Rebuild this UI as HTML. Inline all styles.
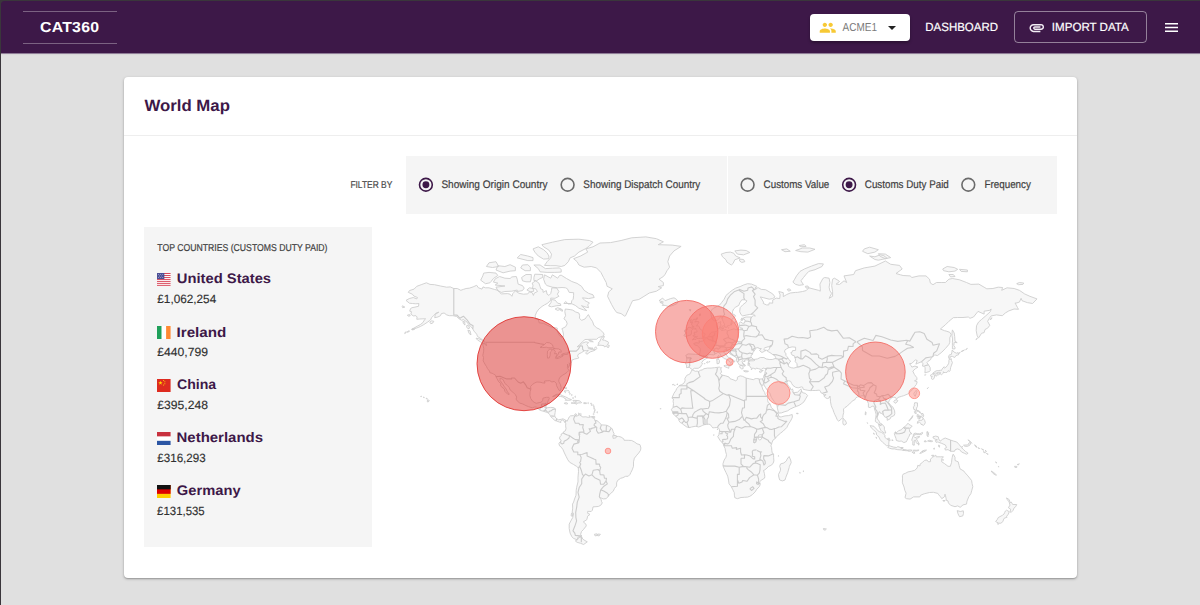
<!DOCTYPE html>
<html lang="en">
<head>
<meta charset="utf-8">
<title>CAT360 - World Map</title>
<style>
*{box-sizing:border-box;margin:0;padding:0}
html,body{width:1200px;height:605px;overflow:hidden}
body{text-rendering:geometricPrecision;background:#e0e0e0;font-family:"Liberation Sans",sans-serif;position:relative;color:#333}
.abs{position:absolute;white-space:nowrap;line-height:1}
#frame-top{position:absolute;left:0;top:0;width:1200px;height:1px;background:#3a363b;z-index:50}
#frame-left{position:absolute;left:0;top:0;width:1px;height:605px;background:#3a363b;z-index:50}
#header{position:absolute;left:0;top:0;width:1200px;height:54px;background:#3d1848;border-bottom:1px solid #8f7c97;box-shadow:0 1px 1px rgba(0,0,0,.04);border-top-left-radius:4px}
#logo{left:23px;top:11px;width:94px;height:33px;border-top:1px solid rgba(255,255,255,.32);border-bottom:1px solid rgba(255,255,255,.32)}
#logo span{position:absolute;left:17.5px;top:8.5px;font-weight:bold;font-size:14.5px;color:#fff;letter-spacing:.2px}
#acct{left:810px;top:14px;width:100px;height:27px;background:#fff;border-radius:4px;box-shadow:0 2px 3px rgba(0,0,0,.3)}
#acct .t{left:33px;top:8px;font-size:11.5px;color:#7a7a7a}
#dash{left:926px;top:21px;font-size:12px;color:#fff;-webkit-text-stroke:.2px #fff}
#imp{left:1014px;top:11px;width:133px;height:32px;border:1px solid rgba(255,255,255,.45);border-radius:4px}
#imp .t{left:38px;top:9px;font-size:12px;color:#fff;-webkit-text-stroke:.2px #fff}
#card{position:absolute;left:124px;top:77px;width:953px;height:501px;background:#fff;border-radius:4px;box-shadow:0 1px 3px rgba(0,0,0,.28),0 1px 1px rgba(0,0,0,.12)}
#title{left:20px;top:21px;font-size:16.2px;font-weight:bold;color:#3d1848}
#sep{position:absolute;left:0;top:58px;width:953px;height:1px;background:#eeeeee}
.fbox{position:absolute;top:79px;height:58px;background:#f5f5f5}
.lbl{font-size:11px;color:#3f3f3f;-webkit-text-stroke:.2px #3f3f3f}
#side{position:absolute;left:20px;top:150px;width:228px;height:320px;background:#f5f5f5}
.cn{font-size:13.8px;font-weight:bold;color:#3d1848;left:33.5px}
.cv{font-size:12px;color:#303030;left:13.5px;-webkit-text-stroke:.15px #303030}
.flag{position:absolute;left:13px;width:13.6px;height:13.2px;overflow:hidden}
/*FIT*/
#lg{transform:translate(-0.92px,0.00px) scaleX(1.0925);transform-origin:0 0}
#ac{transform:translate(-0.42px,1.00px) scaleX(0.8667);transform-origin:0 0}
#dash{transform:translate(-0.67px,0.00px) scaleX(0.9553);transform-origin:0 0}
#im{transform:translate(-1.16px,0.00px) scaleX(0.9639);transform-origin:0 0}
#title{transform:translate(0.43px,0.00px) scaleX(1.0367);transform-origin:0 0}
#fb{transform:translate(-0.62px,0.00px) scaleX(0.8401);transform-origin:0 0}
#l1{transform:translate(-0.62px,0.00px) scaleX(0.9145);transform-origin:0 0}
#l2{transform:translate(-0.65px,0.00px) scaleX(0.9021);transform-origin:0 0}
#l3{transform:translate(-0.39px,0.00px) scaleX(0.8902);transform-origin:0 0}
#l4{transform:translate(-0.20px,0.00px) scaleX(0.8925);transform-origin:0 0}
#l5{transform:translate(-0.56px,0.00px) scaleX(0.8943);transform-origin:0 0}
#top{transform:translate(-0.64px,0.00px) scaleX(0.8665);transform-origin:0 0}
#cn0{transform:translate(-1.18px,-1.00px) scaleX(1.0691);transform-origin:0 0}
#cn1{transform:translate(-1.51px,0.00px) scaleX(1.1015);transform-origin:0 0}
#cn2{transform:translate(-1.02px,-1.00px) scaleX(1.0217);transform-origin:0 0}
#cn3{transform:translate(-1.47px,-1.00px) scaleX(1.0851);transform-origin:0 0}
#cn4{transform:translate(-1.17px,-1.00px) scaleX(1.0662);transform-origin:0 0}
#cv0{transform:translate(-0.69px,0.00px) scaleX(0.9806);transform-origin:0 0}
#cv1{transform:translate(-0.69px,0.00px) scaleX(1.0124);transform-origin:0 0}
#cv2{transform:translate(-0.71px,0.00px) scaleX(1.0122);transform-origin:0 0}
#cv3{transform:translate(-0.69px,0.00px) scaleX(0.9654);transform-origin:0 0}
#cv4{transform:translate(-0.88px,0.00px) scaleX(0.9508);transform-origin:0 0}
/*ENDFIT*/
</style>
</head>
<body>
<div id="header">
  <div id="logo" class="abs"><span id="lg">CAT360</span></div>
  <div id="acct" class="abs">
    <svg class="abs" style="left:9.3px;top:4.9px" width="17.5" height="17.5" viewBox="0 0 24 24"><path fill="#f7c935" d="M16 11c1.66 0 2.99-1.34 2.99-3S17.66 5 16 5c-1.66 0-3 1.34-3 3s1.34 3 3 3zm-8 0c1.66 0 2.99-1.34 2.99-3S9.66 5 8 5C6.34 5 5 6.340 5 8s1.340 3 3 3zm0 2c-2.330 0-7 1.170-7 3.500V19h14v-2.500c0-2.330-4.670-3.500-7-3.500zm8 0c-.29 0-.62.020-.97.050 1.160.84 1.970 1.970 1.970 3.450V19h6v-2.500c0-2.330-4.670-3.500-7-3.500z"/></svg>
    <span class="abs t" id="ac">ACME1</span>
    <svg class="abs" style="left:78px;top:12px" width="8" height="4" viewBox="0 0 10 5"><path d="M0 0h10L5 5z" fill="#222"/></svg>
  </div>
  <div id="dash" class="abs">DASHBOARD</div>
  <div id="imp" class="abs">
    <svg class="abs" style="left:13.3px;top:7.1px" width="17.5" height="17.5" viewBox="0 0 24 24"><path fill="#f3eef5" d="M2 12.500C2 9.460 4.460 7 7.500 7H18c2.210 0 4 1.790 4 4s-1.790 4-4 4H9.500C8.120 15 7 13.880 7 12.500S8.120 10 9.500 10H17v2H9.410c-.55 0-.55 1 0 1H18c1.100 0 2-.9 2-2s-.9-2-2-2H7.500C5.570 9 4 10.570 4 12.500S5.570 16 7.500 16H17v2H7.500C4.460 18 2 15.540 2 12.500z"/></svg>
    <span class="abs t" id="im">IMPORT DATA</span>
  </div>
  <svg class="abs" style="left:1165px;top:23px" width="13" height="9" viewBox="0 0 13 9"><path d="M0 0h13v1.600H0zM0 3.700h13v1.600H0zM0 7.400h13V9H0z" fill="#fff"/></svg>
</div>
<div id="card">
  <div id="title" class="abs">World Map</div>
  <div id="sep"></div>
  <div class="abs" id="fb" style="left:226.500px;top:103.5px;font-size:10px;color:#4a4a4a;-webkit-text-stroke:.2px #4a4a4a">FILTER BY</div>
  <div class="fbox" style="left:282px;width:321px"></div>
  <div class="fbox" style="left:603.500px;width:329.500px"></div>
  
  <svg class="abs" style="left:0;top:0" width="953" height="140" viewBox="0 0 953 140"><circle cx="301.9" cy="107.75" r="6.4" fill="none" stroke="#3d1848" stroke-width="1.6"/><circle cx="301.9" cy="107.75" r="3.45" fill="#3d1848"/><circle cx="443.6" cy="107.75" r="6.4" fill="none" stroke="#6b6b6b" stroke-width="1.6"/><circle cx="623.6" cy="107.75" r="6.4" fill="none" stroke="#6b6b6b" stroke-width="1.6"/><circle cx="725.1" cy="107.75" r="6.4" fill="none" stroke="#3d1848" stroke-width="1.6"/><circle cx="725.1" cy="107.75" r="3.45" fill="#3d1848"/><circle cx="844.3" cy="107.75" r="6.4" fill="none" stroke="#6b6b6b" stroke-width="1.6"/></svg>
  <div class="abs lbl" id="l1" style="left:318px;top:102.500px">Showing Origin Country</div>
  <div class="abs lbl" id="l2" style="left:459.500px;top:102.500px">Showing Dispatch Country</div>
  <div class="abs lbl" id="l3" style="left:640px;top:102.500px">Customs Value</div>
  <div class="abs lbl" id="l4" style="left:741px;top:102.500px">Customs Duty Paid</div>
  <div class="abs lbl" id="l5" style="left:861px;top:102.500px">Frequency</div>
  <div id="side">
    <div class="abs" id="top" style="left:13.500px;top:16.5px;font-size:10px;color:#3f3f3f;-webkit-text-stroke:.2px #3f3f3f">TOP COUNTRIES (CUSTOMS DUTY PAID)</div>
    <div class="flag" style="top:45.5px"><svg width="13.6" height="13.2" viewBox="0 0 13 13" preserveAspectRatio="none"><rect width="13" height="13" fill="#fff"/><g fill="#d8485a"><rect y="0" width="13" height="1"/><rect y="2" width="13" height="1"/><rect y="4" width="13" height="1"/><rect y="6" width="13" height="1"/><rect y="8" width="13" height="1"/><rect y="10" width="13" height="1"/><rect y="12" width="13" height="1"/></g><rect width="7" height="6" fill="#4b4f95"/><g fill="#c9cbe6"><circle cx="1.500" cy="1.500" r=".450"/><circle cx="3.500" cy="1.500" r=".450"/><circle cx="5.500" cy="1.500" r=".450"/><circle cx="2.500" cy="3" r=".450"/><circle cx="4.500" cy="3" r=".450"/><circle cx="1.500" cy="4.500" r=".450"/><circle cx="3.500" cy="4.500" r=".450"/><circle cx="5.500" cy="4.500" r=".450"/></g></svg></div>
    <div class="abs cn" id="cn0" style="top:46px">United States</div>
    <div class="abs cv" id="cv0" style="top:66px">£1,062,254</div>
    <div class="flag" style="top:98.5px"><svg width="13.6" height="13.2" viewBox="0 0 13 13" preserveAspectRatio="none"><rect width="13" height="13" fill="#fff"/><rect width="4.300" height="13" fill="#1fa05a"/><rect x="8.700" width="4.300" height="13" fill="#ff8a33"/></svg></div>
    <div class="abs cn" id="cn1" style="top:99px">Ireland</div>
    <div class="abs cv" id="cv1" style="top:119px">£440,799</div>
    <div class="flag" style="top:151.5px"><svg width="13.6" height="13.2" viewBox="0 0 13 13" preserveAspectRatio="none"><rect width="13" height="13" fill="#de2b1f"/><path fill="#ffde00" d="M3.300 1.800l.500 1.500h1.600l-1.300.950.500 1.500-1.300-.950-1.300.950.500-1.500-1.300-.950h1.600z"/><g fill="#ffde00"><circle cx="6.300" cy="1.500" r=".5"/><circle cx="7.500" cy="2.800" r=".5"/><circle cx="7.500" cy="4.600" r=".5"/><circle cx="6.300" cy="5.900" r=".5"/></g></svg></div>
    <div class="abs cn" id="cn2" style="top:152px">China</div>
    <div class="abs cv" id="cv2" style="top:172px">£395,248</div>
    <div class="flag" style="top:204.5px"><svg width="13.6" height="13.2" viewBox="0 0 13 13" preserveAspectRatio="none"><rect width="13" height="13" fill="#fff"/><rect width="13" height="4.300" fill="#c8313e"/><rect y="8.700" width="13" height="4.300" fill="#2c56a4"/></svg></div>
    <div class="abs cn" id="cn3" style="top:205px">Netherlands</div>
    <div class="abs cv" id="cv3" style="top:225px">£316,293</div>
    <div class="flag" style="top:257.5px"><svg width="13.6" height="13.2" viewBox="0 0 13 13" preserveAspectRatio="none"><rect width="13" height="13" fill="#ffce00"/><rect width="13" height="8.700" fill="#dd0000"/><rect width="13" height="4.300" fill="#111"/></svg></div>
    <div class="abs cn" id="cn4" style="top:258px">Germany</div>
    <div class="abs cv" id="cv4" style="top:278px">£131,535</div>
  </div>
  <svg id="map" width="1200" height="605" viewBox="0 0 1200 605" style="position:absolute;left:-124px;top:-77px;pointer-events:none">
<g fill="#f7f7f7" stroke="#cecece" stroke-width=".9" stroke-linejoin="round"><path d="M406 300.4L409.2 298.6L413.2 297.5L416.8 298.9L417.5 297.5L413.8 296L412.4 294.2L408.3 292.4L409.4 290.6L414.1 289.1L416.8 286.3L421.2 284.7L426.4 282.8L430 284.4L434.4 284.7L440.5 286L446.7 287.2L450.2 286.9L453.8 288.5L457.3 288.5L460.8 290.3L463.4 289.4L466.1 288.5L469.6 288.1L473.1 286.9L476.7 285.3L478.4 287.8L482 289.1L483 286.9L485.5 287.8L489 287.8L494.3 289.4L497.8 290.3L499.9 292.7L501.3 293.9L507.5 293.6L510.1 294.2L511.9 296.3L512.8 293.6L515.4 290.9L519 293.3L523.4 294.2L527.8 293.9L529.5 291.8L532.2 292.7L533.4 295.4L534.3 293L537.5 291.5L535.7 288.8L532.5 288.5L533 285.3L532.2 283.1L535.7 280.8L538.9 283.1L540.1 286.6L540.8 288.8L542.9 289.7L543.1 292.4L546.3 290.6L547.1 294.2L548.9 295.4L550.7 293.6L551.5 290.3L551.9 287.8L556.8 288.1L558.9 291.5L557.4 294.2L558.9 296.3L555.1 298.3L550.7 298.1L550.7 300.1L547.7 303.2L544.5 304.9L542.2 306.3L538.9 309L536.6 312.2L535.2 315.7L535.5 318.8L538.3 319L539.2 322.8L543.6 323.3L547.1 325.1L552.4 327.5L557.2 328L557.5 331.8L559.5 335.4L561.2 337.2L563.2 336.8L563.5 334L562.6 330.4L561.9 328.7L565.6 326.8L567.2 323.8L566.2 320.8L563.9 318.8L565.6 315.7L564.8 311.7L565.3 309L570.1 309.6L572.7 310.1L575.7 312L578.9 313L579.7 315.7L579.4 318.3L581.7 320.3L585 319L587.1 316.2L588.4 314.6L590 317.7L592.6 321.6L593.8 325.1L596.5 327.8L599.7 329.2L601.2 330.7L603.5 333L604.1 334.9L602.1 336.5L598.6 337.5L596.5 339.3L591.2 339.3L585 339.5L582.4 341.8L579.4 344.7L577.1 346.9L579.2 346.1L582.4 343.2L585.9 341.8L588.7 342.5L586.8 344.5L588 346.3L588.4 348.5L590.3 349.1L593 349.3L594.7 350.4L590.3 351.9L586.8 354.3L585.6 352.8L588.4 350.4L586.3 350.6L584.1 350.9L581.5 352.6L578.5 354.1L577.5 356L578.9 357.9L577.1 358.5L574.5 359.1L571.8 360.2L571.6 362.2L570.1 363.9L569.2 362.8L569.7 365.1L568.3 367.7L567.6 364.1L567.4 367.7L568.8 370.5L567.1 372.3L564.8 373.9L562.6 375.2L559.8 377.4L558.8 379.9L558.9 381.8L560.4 384.5L561.2 387.5L560.7 390.3L559.3 390.6L558.1 388.6L556.5 385.6L556.3 383.3L554.2 381.4L551.9 382L549.8 380.7L547.1 380.8L544.5 381L545 383.1L542.7 382.9L540.1 382.2L536.9 382L534.8 382.9L532.2 384.6L530.6 386.5L530.9 389.2L530.1 391.8L529.9 395.6L530.8 398.6L532.7 401.3L534.8 402.6L536.2 403.3L539.2 402.6L541.3 402.2L542.7 400.4L542.9 398.2L546.3 397.3L548.9 397.3L549.3 398.6L548 400.9L547.5 403.1L546.8 404.5L545.6 407.4L547.1 407.8L550.7 407.4L553.7 407.6L555.6 409L555.1 412.6L554.7 415.2L555.1 417L556.8 418.8L558.6 419.8L561.2 419.3L563 418.8L565.6 420.2L566 420.3L565.1 422.6L563.9 420.9L562.1 419.8L560.7 421.1L560.9 422.5L559.5 422.1L556.8 421.1L554.9 420.5L552.4 418.2L551 417L549.8 414.7L548 412.8L546.3 412.2L543.6 411.3L541 410.6L539.2 409.7L536.6 407L534.8 407L532.2 407.8L528.6 406.7L526 405.6L522.8 404L519.8 403.1L517.2 400.9L516.1 399.1L516.7 397.1L515.4 394.7L512.8 392.1L510.1 389.9L509.3 387.7L507.5 385.6L504.9 383.5L503.1 379.5L500.1 378.1L500.1 380.5L502.2 383.3L504 386.2L506.1 389L507.5 391.8L509.3 394.2L508 394.5L504.9 391.4L504.3 389L501.3 386.7L500.5 385.2L501 383.7L498.7 381.8L496.9 378.5L495.9 376.6L495.5 375.2L493.6 374.1L492.2 373.3L489.9 372.7L489.5 371.1L487.4 368.5L486.4 366.3L485.5 365.1L484.1 362.6L483.2 360.8L483.5 357.5L482.8 355.4L483.7 351.1L483.7 348.3L482.5 343.6L485.5 344.1L486.4 345.8L485.8 342.3L485.1 341.6L482.8 340L480.2 338.2L477.5 336.5L476.7 334.2L474 331.1L472.8 329L471.4 327L468.7 324.6L467 322.1L463.4 319.5L461.7 320.3L459.4 319L456.4 316.4L452.9 315.7L449.4 315.7L446.7 314.9L444.1 313L441.4 313.6L440.5 315.7L437.9 317L434.7 317.7L435.3 314.4L438.8 312.2L436.1 313L433.5 315.7L431.7 317.5L430.5 320L427.3 322.3L423.8 324.6L420.3 326.5L416.8 328L414.1 328.7L411.8 329.2L415 327.5L417.6 326L420.3 324.6L422.9 322.6L424.7 319.5L425.6 318.8L422.9 318.8L419.4 319L416.8 319.3L417.1 317L415.9 315.7L413.2 315.9L410.9 314.1L411.5 311.7L409.7 311.2L410.6 308.5L412 307.7L415 307.1L418.5 306.3L418.9 303.5L415.9 303.8L412.4 303.5L409.4 303.2ZM624.7 316.2L621.1 313.6L616.7 312.5L614.1 309L611.5 304.3L609.7 300.7L607.6 296.3L608.8 291.8L612.3 288.8L607.1 286.3L606.2 282.5L603.5 277.5L600.9 272.4L596.5 267.9L591.2 266.5L584.1 267.2L578.9 265L577.1 261.7L573.6 258.7L580.6 256L587.7 252.1L585.9 248.9L593 246.8L600 243L610.6 242.6L621.1 240.5L631.7 237.8L645.8 236.9L656.4 238.7L663.4 241.8L658.2 244.7L672.2 245.1L681.1 246.4L674 250.9L669.6 256L667.8 261.7L669.6 267.2L667 270.7L665.2 274.2L663.4 276.5L659 279.2L663.4 282.5L663.4 285.6L658.2 286.6L661.7 287.8L656.4 291.2L649.3 293L644.1 296.3L638.8 299.5L632.6 300.7L630.8 304.3L629.1 308.2L626.8 313L625.6 315.7ZM659 300.7L662.6 298.1L665.2 300.7L670.5 298.6L674 297.8L676.3 299.2L678.2 301.5L676.7 303.8L673.1 305.4L668.7 306.6L665.2 305.4L662.2 305.4L663.4 304L659.9 302.4L663.4 302.1ZM586.8 310.6L581.5 305.7L585.9 307.1L588.6 307.7L587.7 304.9L589.4 302.9L585 300.7L582.4 297.8L588.6 298.6L594.2 297.5L593 294.8L588.6 293.3L584.1 290.3L581.5 286.3L577.1 283.4L571.8 281.5L566.5 278.5L561.2 275.2L559.5 275.5L557.7 278.2L552.4 274.8L550.7 278.2L544.5 274.8L543.6 279.2L545.4 284.1L547.1 285.6L552.4 287.2L557.7 287.8L562.1 287.5L565.6 287.8L567.4 288.8L569.2 292.4L573.6 292.7L573.6 295.4L573.2 299.2L571.8 300.7L571.3 303.5L563.9 303.5L565.6 301.5L568.3 304L571.8 303.8L575.3 305.4L578.9 308.2L583.3 309.8ZM524.2 288.1L522.5 290.6L517.2 291.5L517.2 290L511.9 291.2L504.9 291.5L501.3 292.4L497.8 290.6L496 287.2L504.9 286L495.2 285L497.8 283.1L493.4 282.1L495.2 278.9L499.6 276.5L504.9 278.2L510.1 278.5L511.9 276.9L516.3 276.5L517.2 279.2L518.1 284.1L522.5 285.6ZM485.5 283.7L489.9 282.8L491.1 281.5L493.4 278.5L497.8 275.5L496 273.1L489 272.4L483.7 273.1L482.8 275.9L480.7 280.2ZM593 242.2L589.4 246L585.9 248.5L578.9 252.1L574.5 256L570.1 257.9L568.3 261.7L564.8 265.4L561.2 266.5L556 265.7L550.7 265.7L544.5 265.4L547.1 261.7L550.7 257.9L551.5 254.1L548.9 250.1L543.6 246.8L541.9 244.7L552.4 242.2L564.8 239.6L578.9 239.2L589.4 240.5ZM548.9 258.7L543.6 259.1L538.3 256L534.8 252.1L533 248.9L538.3 246.8L543.6 249.7L547.1 252.9L548.9 256ZM561.2 272.1L554.2 272.4L547.1 272.4L540.1 271.8L538.3 268.6L533.9 265L540.1 265L545.4 268.6L552.4 268.2L559.5 267.9L561.2 269.7ZM542.7 274.5L534.8 274.2L533.9 277.5L533.9 280.5L536.6 280.8L540.1 278.5L542.7 277.5ZM531.3 274.5L526 274.5L521.6 277.5L522.5 280.8L526 281.8L530.4 281.8L531.3 278.2ZM515.4 270.7L510.1 271.1L503.1 272.8L496 270L497.8 265.7L504.9 266.5L510.1 264.7L515.4 267.2ZM530.4 270.7L525.1 270.7L520.7 267.9L522.5 265L527.8 264.7L530.4 267.2ZM498.7 266.5L492.5 267.5L486.4 266.5L489 262.8L496 261.7ZM533 260.6L527.8 260.6L517.2 257.9L520.7 254.5L527.8 256L533 257.6ZM560.9 305.4L556.8 305.7L551.5 306.8L548.6 306L551 302.4L551.5 299.5L555.1 300.1L557.7 303.2L560.4 303.8ZM533.9 291.2L530.4 291.8L526.9 290L529.5 287.8L533 288.5ZM561.2 309L557.7 310.4L555.1 309L557.7 307.7ZM562.5 311.2L560.7 310.6L561.2 309.3L562.5 309.8ZM597.7 345.4L599.1 343.4L598.2 343.2L600 341.1L600.9 338.9L602.3 337L604.4 336.3L603.7 338.2L602.5 340L604.4 340.2L607.1 341.4L607.9 341.6L608.6 342.9L607.4 344.9L609.3 345.4L608.6 347.5L607.1 347.2L606.7 345.8L604.4 346.9L603.9 345.6L601.8 345.4L600 345.2ZM594 349.8L596 349.6L596.8 348.7L595.8 346.7L594.2 348.3ZM588.9 347.6L591.2 348L593 348L592.1 348.9L589.8 348.5ZM588.6 340.2L592.1 340.9L593.3 341.8L590.3 341.6ZM476 338.2L478.4 338.6L482 340L484.6 342.9L484.8 343.6L482.5 343.4L480.2 341.6L477.5 340ZM467.9 330.2L470 330.7L471 334.9L469.1 333.5ZM429.8 322.1L431.7 320.8L433.8 321.3L433 322.8L430.9 323.8ZM467 325.1L468.7 325.8L469.6 328.2L467.9 328.7L466.6 327ZM462.9 321.1L464.7 321.8L465 325.1L463.4 323.6ZM402 306.3L402.7 305.9L404.8 307.1L402.7 307.7ZM407.4 315.1L409.7 314.6L410.2 315.9L408.3 316.2ZM411.6 329.5L414.1 329L414.5 329.5L412 329.9ZM407.1 331.8L409.2 330.7L409.4 331.4L407.4 332.3ZM404.4 333L406.2 331.8L406.5 332.3L404.8 333.5ZM427.3 401.8L427.5 399.7L429.1 400.4L429.4 400.9L428 402ZM426.1 398.4L427 398.2L427.3 398.7L426.4 398.9ZM423.3 397.3L424 396.9L424.3 397.6L423.6 397.6ZM420.6 396.4L421.3 396L421.5 396.6L420.8 396.6ZM552.6 396.6L556 394.5L557 394.2L560.4 394.5L562.1 395.6L565.6 396.9L568.8 398.6L571.6 399.7L570.1 400.2L565.3 400.3L566.2 399.1L564.2 398.2L563.5 397.1L560.4 396.4L558.1 396L555.1 396ZM571.1 403L573.9 402.9L574.6 402.6L573.9 401.6L572.9 400.4L575.9 400.4L579 400.7L580.3 401.3L581.7 402.6L580.6 402.9L578.9 402.9L576.9 403.3L576.4 404.4L575.3 403.5L573.6 403.3ZM564.2 403.1L566.5 402.7L567.9 403.6L566.5 404L564.4 403.5ZM583.8 402.7L586.6 402.9L586.3 403.6L583.8 403.6ZM564.4 390.6L565.3 391.8L565.5 392.7L564.4 391.8ZM563.2 387.7L564.9 387.7L566.2 388.6L564.8 388ZM593.1 416.6L594.7 416.5L594.7 417.7L593.1 417.7ZM566 420.3L566.9 421.4L568.3 418.9L569.2 417L570.4 415.9L573.6 415.6L575.9 413.6L576.6 414.7L575.5 415.9L576.2 416.3L578.9 415.2L578.9 414L579.7 415.2L581.9 416.1L582.4 417L585.9 416.8L588.6 417.5L591.2 416.6L593 416.6L591.7 417.4L594.7 418.8L594.7 420.5L596.5 420.5L598.2 421.4L600 423.5L601.8 424.9L605.3 425.1L607.1 425.4L609.7 426.7L611.3 428.1L612.3 428.8L613.2 431.9L614.1 433.7L613.6 435.1L615.5 435.7L616.7 436.6L618.5 436.4L621.1 437.1L623.8 438.9L624.1 440.3L628.2 440.3L631.7 440.5L634.4 441.9L637 443.8L640 444.7L640.9 448L640.5 450.3L638.8 452.9L636.8 455.2L634.4 458.2L633.5 461.8L633.5 466.3L632.2 469.9L630.8 472.6L630 474.4L628.2 476.3L625.6 476.3L622.9 477.7L620.6 478.3L617.6 480.5L616.6 482.8L616.6 486L614.5 488.4L613.2 491.3L610.4 493.6L608.1 496.5L606.2 498.7L603.2 498.9L600 497.5L599.3 497.1L601.2 499.7L601.6 501.7L602.3 502.9L600.7 505.3L598.2 506.5L593 506.9L592.4 510.2L591.2 511.5L587.7 511.3L587.7 513.3L590 514.4L587.7 516.1L586.8 519.7L583.3 521.9L585.9 524.1L586.3 525.9L583.3 529.7L581.5 531.5L580.6 534.3L581.7 536.1L578 537.1L577.1 539.7L573.6 538.5L571.8 536.6L570.1 533.1L569.2 528.5L569.2 524.1L570.9 520.8L572.7 517.6L573.6 513.3L572.2 512.3L572.7 508.2L572.5 504.1L573.6 502.1L574.5 499.1L576 495.2L576.2 490.3L576.6 487.5L578 481.8L578 477.2L578.5 471.7L578.3 467.9L576.6 466.4L573.6 464.5L569.7 462.3L567.8 459.8L566.2 456.6L564.4 452.9L563 449.7L561.4 447.3L559.5 445.9L558.9 443.3L560.7 441.3L561.2 440.1L559.7 439.2L559.7 437.1L561.2 435.4L561.2 434L563.2 433L563.4 431.9L565.3 430.9L566 428.6L565.6 425.8L565.8 423.7L565.1 422.6ZM581.7 536.8L578.9 537.5L577.5 539.7L575.3 540.9L577.1 542.3L580.6 543.3L583.6 544.5L587.3 541.8L585 540.6L582.7 539ZM571.5 513.1L572.7 513.3L572.5 516.3L571.1 515.9ZM594.4 534.3L596.8 533.8L597.4 535.4L595.1 535.9ZM597.7 534L600.4 534.3L599.1 535.9L597.5 535.6ZM612.7 435.7L615 435.7L616.7 435.9L616 437.8L613.2 438.4ZM691.8 370.1L692.9 369.9L695.2 371.3L697.1 371.1L698.7 371.5L700.4 370.3L702.2 369.9L704 368.7L707.5 368.1L711 368.1L714.5 367.7L719.5 367.1L720.3 367.7L721.6 367.7L720.7 368.9L721.2 370.7L721.6 372.3L720.2 373.3L721.2 374.5L722.5 375.2L725.5 375.8L729 377L730 378.7L733 379.7L735.7 380.8L737.4 379.5L737.4 377.2L740.1 375.8L742.7 376.4L746.2 378.1L749.8 378.9L753.3 379.7L755.1 378.7L756.8 378.5L759.1 378.9L759.5 381.4L759.6 382.4L761.2 385.2L762.1 387.1L763 389.9L764.8 392.7L765.1 394.5L767.2 396.4L767.7 398.2L767.7 400.7L768.3 402.7L770 403.6L771.4 407.8L773.6 409.4L775.3 411.2L777.1 412.6L778.3 413.5L778.5 415.2L779.7 417L781.5 416.8L785 415.9L788.5 415.6L792.2 414.5L792.4 417L791.7 418.8L790.3 421.4L788.5 424L786.8 427.5L783.3 431L780.6 433.1L778 435.4L776.2 437.1L775.3 438.5L773 440.1L772 442.7L770.9 445.9L771.6 447.6L771.8 450.3L772.2 452.9L773.6 454L773.6 457.3L773.9 460.9L773 463.6L770.9 465.4L768.3 466.6L767 468.1L764.8 469.9L763.5 470.4L764.4 473.5L764.8 476.3L764.6 478.1L761.2 480.3L759.6 481.8L760.2 484.6L759.3 486.7L756.8 489.2L755.1 491.9L752.4 494.6L749.8 496.3L747.5 497.1L744.5 497.3L741 497.5L737.4 498.7L734.8 497.7L734.4 495.2L734.3 492.7L732.7 489.4L731.3 486.7L729 483.7L728.5 480L727.7 476.1L726 472.6L724.2 468.8L723 465.9L723 463.6L724.2 460L726 457.2L726.5 454.7L725.5 451.2L725.1 448.5L723.9 446.1L723.3 444.1L721.9 442.4L719.8 440.1L718.6 438L717.7 436.6L718.9 434.9L719.1 433.3L719.5 431.4L719.5 429.6L718.9 428.4L717.7 427.5L716.8 427.5L714.5 427.7L712.8 427.9L711.5 426.3L710.1 424.4L708.2 424.2L706.6 424.4L704.3 424.7L702.2 425.4L701.8 425.8L698.7 427L696.9 426.5L695.2 426.3L691.6 427L689 427.7L686.3 426.7L683.2 424.4L681.9 423.3L680.2 422.5L678.9 420.5L678.8 418.8L676.3 417L675.8 416.1L674 414.7L672.8 413.6L672.6 412L671.4 409.6L673.1 407.2L673.5 403.6L673.1 401.3L673.5 399.1L672.1 398.4L672.2 397.3L674 393.2L675.9 390.5L676.7 388.6L678.4 386.7L679.5 385.4L681.9 384.6L684.2 382.8L685.1 380.7L684.9 378.5L686 376.6L687.2 375L688.8 374.5L690.2 373.7L691.3 371.3ZM789.1 456.5L790.7 460L791.2 462.7L789.4 466.3L789.2 467.5L787.7 472.6L785.9 477.2L785 480L782.4 480.9L779.7 480L778.8 477L778.5 474.4L780.3 470.8L780.6 469L779.7 466.3L780.6 463.9L783.8 463L786.4 460.9L787.1 459.1ZM796.3 413.3L798.2 413.3L798.1 413.8L796.5 413.6ZM672.4 384.5L673.7 384.3L673.1 385.2ZM674.4 385L675.1 385L674.9 385.6ZM677.2 383.9L677.9 384.1L677 385ZM660.3 408.5L661 408.7L660.6 409.2ZM799.6 472.4L800.5 472.8L800 473.3ZM803.3 470.8L804 471.3L803.3 471.7ZM778.5 455.6L778.8 456.1L778.3 456.3ZM717.4 428.8L717.9 429.1L717.4 429.8ZM713.7 434.7L714.2 434.9L713.7 435.4ZM692.3 369.7L691.1 368.7L689.2 367.3L686.5 367.7L686.7 364.9L685.5 364.1L686.5 361.2L686.9 359.1L686.5 357L685.8 355.4L688.1 353.9L692 354.1L695.5 354.3L699 354.5L699.6 354.1L700.1 351.7L700.3 349.8L700.1 348.5L698.3 346.5L697.3 345.6L694.6 344.9L693.7 343.6L696 342.7L698.7 343.1L699.4 342.9L698.9 340.7L700.3 341.4L702.4 341.1L704.8 339.8L705 337.9L706.6 337.5L708.2 336.8L709.2 335.4L710.5 333L711.9 332.1L714.5 331.8L716.3 331.4L717.4 330.9L717.9 329.5L717.4 328.2L716.5 326.8L716.5 324.6L717.4 323.1L720.9 321.6L720.3 324.3L721.4 324.8L720.2 326.3L719.3 327.8L719.6 328.7L721.4 329.7L721.6 330.7L723.7 330.2L726 329.5L727.4 330.9L730.4 329.9L734.4 328.7L735.1 329.7L736.9 329.7L737.4 328.5L739.2 327.5L739.4 325.8L739.2 323.3L740.4 321.8L742.7 323.3L744.5 323.1L745.2 320L743.6 319L743.6 317.7L746.2 317L751.5 317L753.3 315.7L755.4 315.9L753.3 314.1L749.8 314.4L746.2 315.1L742.7 315.9L741 314.6L739.7 311.7L740.1 307.7L742.7 304.9L746.2 302.1L746.8 300.7L744.8 299.8L741.8 299.8L739.7 302.9L738.8 305.4L735.7 307.1L733.6 309L732.5 311.7L732.5 313.8L734.8 314.9L735.5 316.2L734.1 317.5L731.8 319.5L731.3 322.1L730.7 324.6L729.5 325.6L727.4 325.8L727.2 327.3L725.1 327.3L724.6 325.6L724.4 324.1L723.2 321.6L721.9 318.5L721.1 317.5L720.9 315.9L719.5 318.3L717.2 320.3L714.5 320.8L712.2 319.3L711.5 317L711 314.6L711 311.7L711.5 309.8L713.7 308.2L717.2 306.3L719.8 304.9L721.6 302.6L724.2 299.2L726 295.4L729.5 292.4L732.2 290.3L735.7 288.1L740.1 286.6L743.6 285L747.5 283.7L751.5 284.1L756.8 286.3L755.1 288.1L758.6 287.8L761.2 289.4L765.6 289.7L772.7 293.9L775 296.9L772.7 298.6L769.2 299.2L763.9 297.8L760.3 296.9L761.2 298.3L763.5 302.1L763.3 303.5L766.5 304.9L768.8 304.9L769.2 302.9L772.7 303.2L772.7 300.1L776.2 298.1L779.7 298.6L780.1 294.8L778.8 291.5L783.3 292.7L783.3 296.6L786.8 294.5L790.3 293L795.6 292.4L797.3 292.4L802.6 291.5L806.2 290.6L808.8 287.8L815 289.4L818.5 290.3L820.3 291.2L820.3 288.5L819.9 284.1L822.9 278.5L824.7 277.5L829.1 278.2L829.9 282.5L829.1 287.2L829.9 290.9L831.7 293.3L829.1 298.3L832.6 296.3L832.6 291.8L831.7 285.6L832.6 279.2L834.4 278.2L837.9 280.2L839.6 281.5L836.1 284.1L839.6 284.4L844 280.8L846.7 282.5L844 275.9L853.7 274.5L855.5 270.7L864.3 267.9L874.9 266.1L885.4 261L890.7 264.3L899.5 265.4L902.2 269L896 273.5L900.4 274.8L903.1 275.5L910.1 275.9L911.9 277.5L918.9 275.9L926 275.9L929.5 279.2L930.4 283.1L933 284.7L936.5 282.5L941.8 282.5L945.4 282.5L948.9 279.2L952.4 278.5L959.5 279.8L966.5 282.5L970.9 284.4L978.8 284.1L984.1 287.2L986.8 288.8L992.9 288.5L998.2 287.2L1002.6 287.5L1001.7 290.3L1007 287.8L1014.1 288.5L1019.4 290.3L1024.6 293.9L1029.9 296.3L1037 298.9L1032.6 303.5L1027.3 302.6L1022 300.7L1021.1 298.3L1019.4 302.1L1015.8 303.2L1015 302.9L1017.6 307.7L1018.5 309.3L1014.1 309L1008.8 310.9L1005.3 313L1002.3 315.7L996.5 314.9L991.2 315.9L989.4 318.3L987.6 321.3L989.8 325.3L987.6 328.2L985 329.5L984.1 332.6L981.5 333.3L978.8 337.7L978.3 337.9L977.1 335.4L976.2 330.7L976.5 325.8L978.5 322.1L981.5 319.5L985.9 315.7L990.3 311.7L991.2 309L989.4 310.4L984.1 311.2L984.1 314.1L978 311.4L973.5 317L970 318.3L968.3 317L963 317.5L957.7 317.5L953.3 317.7L948.9 321.3L945.4 324.8L940.4 329L944.5 330.7L946.2 331.1L949.8 332.3L951.2 334.7L949.8 337.7L949.8 342.3L948.9 344.5L945.4 348.5L941.8 352.2L937.4 355.6L934.8 354.9L932.5 356.8L931.3 357.5L930.7 359.5L927.7 361.6L926.9 362.6L928.4 364.7L930.2 367.7L930.2 370.7L929.5 371.5L926.9 372.3L924.9 372.9L925.1 370.5L925.1 367.7L924.2 366.3L922.5 366.1L923 363.7L921.4 361.8L917.2 363.5L915.9 364.1L917.2 360.6L915.4 359.8L911.9 363.3L909.6 363.7L911 365.7L911.9 367.1L914.9 366.1L918 367.1L915.4 368.7L912.8 371.1L914.5 374.7L916.8 377.6L917 379.7L914.5 380.8L917.2 381.8L916.3 384.6L914.5 386.7L912.9 389.3L910.3 391.8L907.8 394L903.4 395.8L901.3 396.4L897.8 397.5L896.5 399.5L895.7 397.5L893 397.1L890.7 398.4L889 400.9L888.6 402.6L890.7 405.4L893 407.2L894.6 410.8L894.8 413.5L894.3 415.4L890.7 417.2L890.2 418.8L887.2 420.3L887.2 417.9L884.6 416.8L883.5 414.9L881.9 413.5L880.2 413.1L880 411.9L878.9 411.9L878.4 414.3L877.2 417L877.2 419.1L878.9 420.5L879.5 422.8L881.4 423.7L882.5 424.6L884.4 427L884.4 429.3L885.8 433L884.4 433L881.9 431.4L880.7 430.2L879.5 427.5L878.9 425.8L878.8 424L877.9 423.2L875.4 421.6L875.4 419.6L875.9 417L876.1 414.3L875.4 411.7L874.5 409L874.2 406.3L872.2 406.2L870.1 407.6L868.4 407.2L868.4 403.6L867.3 400.9L865.7 399.1L864.8 398.2L864 395.8L861.7 395.8L859 396.7L857.3 396.9L855.5 398.2L855.1 399.5L852.9 400.7L850.2 403.1L847.2 406.2L844.9 407.6L843.5 409L843.7 412.4L843 415.2L842.8 417.4L841.4 419.1L840 420L838.8 421.2L837 419.6L836.5 417.9L834.9 414.7L834 412.6L832.9 409.4L832.2 408.1L831.2 405.4L830.5 401.8L830.3 398.2L829.9 396L829.1 398L827.3 398.6L825.5 397.8L823.8 395.8L826.1 394.7L823.8 394.9L822.5 393.4L821.1 392.9L820.3 391.2L819.4 390.1L815.8 390.5L812.3 390.5L810.7 390.6L807.9 390.3L805.8 389.9L803.2 389.3L802.6 387.1L801.4 386.9L798.2 387.8L795.6 387.3L792.9 385.4L791.7 383.5L790.7 381.4L788.5 380.7L787.8 381.4L786.8 382.6L787.5 384.3L788.5 386.2L790.3 387.7L790.7 389.7L791.7 389.9L792.4 388.8L793.1 390.8L792.6 392.1L794.7 392.5L797.3 392.3L799.6 390.3L801 388.8L801.6 391L802.6 392.7L805.5 393.4L807.6 395.5L805.5 399.1L804 401.8L801.8 403.6L799.1 405.4L794.2 407.2L790.3 409L787.7 410.8L784.1 411.9L781.5 412.9L778.8 413.1L778 410.8L777.4 408.1L777.1 405.8L774.4 401.8L771.3 397.3L770 393.6L767.7 390.8L765.6 387.7L763.9 385L763.9 382.4L762.8 385.2L762.5 385.8L760.7 384.3L759.6 381.6L759.3 379.1L762.5 378.9L763.5 377.4L763.9 375.6L764.8 373.9L765.3 370.7L765.8 369.7L766 368.5L764.8 368.5L763.2 368.1L761.2 369.5L758.6 368.7L756.3 368.1L755.8 369.1L753.5 368.3L751.9 368.3L750.5 367.7L750.1 366.3L748.5 365.1L749.8 364.7L749.4 363.1L748.2 362.6L748.4 361.6L750.7 360.8L753.3 360.8L754.9 360.2L753.3 359.5L755.1 359.3L757.5 358.9L760.3 357.5L763.9 357.5L766.2 358.9L769.2 359.5L772.2 359.5L775.3 358.5L775.7 357.3L774.4 355.4L772.7 354.5L770 352.6L768.3 351.7L766.9 350.6L768.3 350.2L769.5 348.9L769.2 347.6L771.4 346.5L769.5 346.5L768.3 346.7L764.8 347.8L763.9 348.7L764.2 350.2L766.5 350.2L764.6 351.1L762.8 352.2L761.2 352.2L759.5 350.2L761.4 348.7L758.6 348.3L758.4 347.6L756.3 347.8L754.5 350.4L752.8 352.8L752.4 354.5L751.4 354.9L751 356.4L751.5 357.7L753.3 359.1L751.5 359.5L749.8 360.2L748.4 361L749.4 360.4L748 360L746.2 359.8L744.5 360.2L745 361.4L743.6 361.6L742.5 360.6L742 361.6L742.7 363.1L743.1 364.3L744.5 365.3L744.5 366.3L743.4 365.7L742.7 365.9L743.1 366.9L743.1 368.7L741.7 368.9L740.4 368.1L739.7 366.3L740.4 365.3L742.5 365.5L740.1 365L739.2 364.9L738.7 363.9L737.8 362.4L736.2 360.8L736.6 358.5L736.2 357.7L734.8 356.6L733 355.4L730.4 354.3L729 352.8L727.7 350.6L726.7 351.5L726.2 350L726.5 349.6L723.9 350.2L723.9 352.6L726.2 354.1L727.2 356.4L729 357.7L730.7 357.7L730.4 358.7L732.2 359.3L734.8 361.2L734.6 362L732.5 360.6L731.4 362.2L732.3 363.7L731.3 364.9L730.6 365.9L729.8 365.7L730.2 364.5L730.7 363.3L730 361.8L729.2 361.4L728.3 360.4L727.2 360L726.2 359.1L724.4 358.7L723.7 357.9L721.6 356.6L720.7 355.4L720.3 354.3L719.5 353L717.9 352.4L716.3 353.4L715.2 353.9L713.7 354.9L711.7 354.7L710.1 354.5L708.4 354.7L707.5 356.4L707.8 357.7L706.1 358.7L703.6 360L701.7 362.6L702.6 364.1L701.3 365.1L701 366.5L699 367.7L698.3 368.3L696 368.3L694.4 368.3L692.9 369.3ZM692.2 339.9L694.8 339.2L695.9 339.5L696.9 338.4L698.7 338.6L700.4 338.3L702.7 338.3L704 337.7L704.7 337.2L704.7 336.8L703.3 336.5L704 335.9L705.2 334.2L704.5 333.2L703.1 333L702.6 333.3L702.8 332.6L702.4 331.6L702 330.4L701.1 329.5L700.1 329.1L699.6 328L699.4 326.8L698.7 326.3L697.6 325.8L696.4 325.8L697.6 325.1L697.3 324.7L698.5 323.1L699 322.1L698.7 321.6L696 321.6L694.8 322.1L695.3 321.1L696.7 319.8L696.9 319.2L693.4 319.3L692.9 320.3L692 321.8L692.3 323.3L691.3 324.1L692.3 325.1L692.2 327.5L693.4 326.5L693.7 326L693.7 327.5L693.2 328.6L693.6 329.1L696 328.5L695.9 329.5L696.6 330.4L697.1 330.8L696.9 332.1L696.4 332.2L694.4 332.1L693.9 333.5L695 334L695 334.7L693.9 335.2L692.9 335.6L693.2 336.2L694.8 336.3L696.6 336.7L697.4 336.3L696.9 337.2L694.8 337.2L694.2 337.7L693.2 339.1ZM690.9 334.9L691.5 333L691.5 332.1L691.3 330.7L692.5 329.7L692.3 329L691.5 327.8L689.2 327.3L687.6 327.9L687 329L687.6 329.5L684.6 330.2L684.6 331.8L686.3 332.6L685.5 333.3L684.8 334.4L683.9 335.2L684.4 336.1L685.5 336.5L687.6 335.9L689.9 335.2ZM689.7 320.8L691.3 319.5L691.3 320.3L690.2 321.3ZM690.4 322.1L691.5 321.8L692.2 322.8L691.1 323.1ZM699.4 314.1L700.4 313.8L700.3 315.7L699.6 315.9ZM696.4 318L697.6 317.7L697.3 318.8L696.4 318.5ZM689.3 309.6L690.7 309.6L690.4 311.2ZM721.9 326.5L723.3 325.6L724.4 326.5L723.7 327.8L723.3 329L721.9 327.8ZM719.5 327L720.9 326.8L721.2 327.8L720.2 328.1ZM721.6 328.5L723.2 328.7L722.8 329.2L721.8 329ZM734.3 323.1L735.7 321.1L735.3 322.6L734.4 323.6ZM731.1 325.3L732.3 322.6L732 323.6ZM740.6 320L741.3 319.3L743.3 319.5L742 320.6ZM741.1 318.5L742.4 318L742.7 318.8L741.8 319ZM728.1 327.8L728.8 327.8L728.6 328.2ZM724 365.7L725.6 365.3L729.7 365.1L728.8 367.1L728.8 368.3L727.4 367.7L724.4 366.5ZM716.6 359.5L718.4 359L719.5 360.6L719.1 363.3L718.1 363.7L717 363.7L717 361ZM717.4 356.6L718.8 355.4L719 357.3L718.4 358.7L717.5 358.1ZM743.6 370.7L744.8 370.7L747.5 371L748.5 371.3L748 371.7L745.7 371.9L743.8 371.2ZM759.1 371.7L760.2 371L763.2 370.3L761.9 371.7L760.3 372.5ZM706.4 362.4L707.8 361.7L708.2 362.4L707.5 363.1ZM708.9 361.6L709.8 361.6L709.6 362ZM704.3 363.7L705 363.5L704.7 364.1ZM751 369.3L751.9 368.9L751.5 369.9ZM742.7 363.7L744.7 364.5L745.5 365.7L744.5 364.9ZM747.8 363.3L749.1 363.1L748.9 363.7L748 363.7ZM747.8 364.5L748.4 364.7L748 365.3ZM721.2 254.1L722.5 256.8L726 259.8L726.9 262.1L731.3 265L733 263.6L734.8 259.8L740.1 257.9L735.7 256L733.9 253.3L730.4 252.1L726 252.5ZM734.8 250.9L737.4 254.1L743.6 254.8L749.8 252.5L746.2 250.5L741 250.1ZM739.7 259.1L743.6 259.5L744.8 261.7L741.8 262.4L739.6 261ZM792.9 282.1L794.7 279.2L796.5 275.9L800 271.4L804.4 269L811.4 266.1L818.5 263.6L823.4 263.9L822 266.5L815 269.7L808.8 271.4L806.2 274.2L803.5 277.5L800.9 280.8L803.5 284.7L799.1 285.3L795.6 284.4ZM787.3 289.4L789.4 288.8L790.8 290.3L788.5 291.2ZM805.3 286.3L807.9 286L808.8 287.8L806.2 288.1ZM781.5 249.7L786.8 248.9L790.3 251.3L785 251.7ZM795.6 250.5L802.6 248L809.7 248L815 249.3L807.9 252.1L800.9 251.7ZM799.1 245.6L804.4 244.7L806.2 246.4L800.9 246.8ZM869.6 256L874.9 256.8L880.2 254.8L883.7 255.6L887.2 258.3L878.4 260.2L874.9 259.5ZM862.5 251.3L867.8 253.7L874.9 252.1L878.4 249.7L869.6 247.2L864.3 248.9ZM878.4 253.7L885.4 254.1L890.7 257.6L885.4 258.7L880.2 256.4ZM942.7 269L947.1 266.5L954.2 267.5L957.7 269.3L955 271.1L948.9 271.8L943.6 270.7ZM959.5 269.3L967.4 270L967.4 271.8L961.2 271.4ZM948.9 274.5L953.3 274.5L955 276.5L950.6 276.9ZM1016.7 283.7L1019.4 282.5L1023.8 283.1L1022.9 284.4L1018.5 284.7ZM952.4 329.9L954.2 333L954.7 336.5L955 341.1L957.2 342.7L954.2 342.3L953.8 345.6L955 347.4L954.9 348.9L952.4 348.9L952.4 345.6L952.4 342.3L952.6 338.9L951.9 335.4L952.1 332.1ZM952.2 350L954.2 352.2L956.5 353.2L958.2 352.6L958.6 354.7L955.9 355.6L954.7 357.5L952.4 356.4L950.6 356.4L949.4 356.8L950.6 358.1L948.9 358.5L948.5 356.4L949.6 354.7L951.2 354.7L951.9 352.2ZM951.2 358.7L951.5 360.6L952.4 362.6L951.5 365.1L950.6 367.7L950.3 369.7L950.5 370.3L948.9 371.7L948.5 370.5L947.5 371.3L946.8 372.5L945.7 372.5L943.6 372.5L943.4 371.7L943.4 373.1L942.4 373.9L941.5 374.7L940.2 373.9L940.4 373.1L940.4 372.3L938.3 372.3L936.5 373.1L935.5 373.1L933 373.7L932.8 373.7L933 372.9L933.9 372.3L936 370.9L937.1 370.7L938.8 370.5L940.6 370.3L941.7 370.3L942 369.1L943.1 367.9L944.1 366.7L943.6 367.5L944.1 368.1L945.9 367.3L947.3 365.7L948.5 363.7L948.9 362.2L948.9 360.4L949.4 359.1L950.1 359.8ZM935.7 374.5L936.5 373.7L938.3 373L939.5 373.3L939.5 374.1L938.7 375L937.4 374.7L936.5 376.2L935.5 375.6ZM932.8 373.9L934.3 374.5L934.8 376L933.9 378.7L932.5 379.5L931.6 378.9L931.6 377.2L932.3 376.4L930.9 376.4L930.4 375.2L931.6 374.5ZM927.2 388.8L928.3 387.5L927.9 388ZM958.6 353.7L960.3 352.2L959.8 352.8ZM961.2 351.5L964.4 350L963 350.9ZM965.6 349.6L967.4 348.5L966.5 349.1ZM975.8 339.5L977.4 338.2L976.7 339.3ZM989.9 319.5L992 317.7L991.2 319.3ZM924.6 375L925.8 374.7L925.3 375.2ZM916.3 390.3L917.2 390.8L916.5 392.7L915.2 396.4L914 394.7L913.8 393.4L914.9 391.6ZM893.7 401.8L895.1 403.3L896.9 402.2L897.8 400.6L896.9 399.8L894.8 400.2ZM843 418.2L844.7 419.8L846.3 422.3L846.2 424L844.2 425.1L843.2 424.4L842.8 422.3L843 420.5ZM865.5 411.7L866.1 412.6L865.7 415.1L865.2 414.3ZM867.3 422.6L867.7 423.2L867.5 423.5ZM914.7 402.7L917.5 402.9L917.5 406.3L916.5 408.1L916.6 410.3L918.9 410.8L920.9 412.6L920.3 413.1L918.4 411.5L916.6 411L915.2 411.2L915.2 409.7L913.8 409.4L913.3 406.9L914.3 406.2L914.3 404.5ZM923.2 418.2L924.7 420.5L925.3 422.6L924.6 424.2L923.2 425.6L922.8 424.7L921 424.4L920.7 423.2L919.6 422.3L917.3 423.3L917.7 421.4L919.8 420.3L921.9 420.3ZM921.2 413.5L923 413.5L923.7 415.8L922.8 417.5L922.1 417.7L921.4 416.3L922.3 415.4ZM917.2 414.5L919.1 415.2L919.1 416.5L918 416.8L917.2 417ZM918.7 416.3L919.8 416.3L919.5 419.1L918.2 418.9L917.9 418.1ZM919.6 418.8L920.7 415.8L920.7 417.4ZM908.7 420.7L910.1 419.3L912.8 415.6L912.4 417.4L911 419.3L909.2 420.9ZM914.3 411.7L915.8 411.9L916.3 413.3L915.6 414L914.9 412.9ZM895.3 431.9L896.7 432.6L898.5 430.7L901.3 429.8L903.1 427.7L904.8 426.7L906.6 424.9L908 423.2L908.9 424.4L910.3 425.1L912.2 426.3L910.1 427.9L909.4 429.5L909.8 431.9L911.9 433.7L909.9 434L909.1 436.3L908.4 437.5L906.9 440.6L906.4 441.7L903.9 442.6L901.3 441L899.2 441.3L896.4 440.5L896 438.5L894.8 435.4L894.3 433.7ZM870.1 425.6L874 426.3L876.1 428.8L879.1 431.6L881.6 432.4L884.4 434.5L885.1 435.9L884.6 437.1L886.3 438.5L889.1 440.6L888.8 442.9L888.8 445.5L887.7 445.5L886.5 445.7L884.6 444L882.5 442.2L880.2 439.8L879 437.1L876.6 434.9L876.3 432.4L873.5 429.8L871.5 428.1ZM887.6 438.4L889.3 438.2L890.2 440.5L888.8 440.1ZM891.8 439.9L893 440.1L892.5 441ZM873.3 433L874.5 433.8L874.2 434.4ZM875.9 437.1L877 438.2L876.5 438.4ZM887.7 447.3L889 445.7L890.4 446.1L893.6 447.1L896.7 447.5L897.8 446.6L900.8 447.6L900.8 448.3L903.1 448.7L903.8 450.1L903.9 450.6L901.3 449.9L897.8 449.7L894.3 448.9L892 448.9L889.7 448.3ZM901 447.6L903.1 447.5L902.9 448L901 448ZM903.9 449.7L905.9 449.7L905.4 450.8L904.1 450.3ZM906.4 449.9L907.8 450.1L907.5 451L906.4 450.8ZM908 450.1L910.6 449.9L912.2 450.3L911 451L908.4 451.3ZM913.3 450.1L916.3 450.3L918.9 449.9L918.6 450.6L915.4 451.1L913.5 450.8ZM911.9 452L914 451.9L915 453.1L913.6 453.4ZM919.8 453.4L921.6 451.5L924 450.3L926.5 450.1L925.1 451.2L922.5 452.4L920.7 453.4ZM913.3 434.2L915 433.1L917.2 433.6L919.8 433.8L922.5 432.4L922.8 433L921.4 434.7L918.9 434.6L916.3 434.6L914 434.9L913.8 436.4L915 437.8L916.6 437L919.5 436.4L919.6 437.1L917.5 438.2L916.3 438.7L917.7 441.2L918.6 442.9L917.2 443.8L916.3 442.6L915.4 440.1L914.2 440.5L914.3 443.3L914.3 445.2L912.8 445L912.8 441.5L911.7 440.1L912.4 438L913.3 435.6ZM918.2 443.3L919.3 443.6L918.6 445.2ZM926.9 431.7L927.7 431.6L927.6 433.3L929 432.8L928.1 434L929.1 434.9L927.7 434.7L928.1 436.8L927.2 435.9L926.9 433.8ZM927.6 441L929.5 440.3L932.7 441.2L931.3 441.7L928.6 441.3ZM924.2 441L926 440.8L926.3 441.7L924.6 441.9ZM938.7 445L939.7 445.5L939.4 447.3L938.5 446.4ZM933.7 448.3L934.4 448L934.1 449.4ZM933 436.8L935.7 436.1L938.3 436.8L938.7 438.9L940.1 441.2L942.7 439.2L945.2 438L950.1 439.9L953.3 441L956.8 442L959.1 444.5L961.2 447.1L962.8 446.6L961.6 447.6L963.3 449.4L965.3 451.3L968.1 453.3L966.5 454.2L964.7 453.4L961.6 452L959.5 449.6L957.3 448.9L955 449.9L954.5 451.3L950.6 451.3L948 449.6L945.4 450.1L944.8 448.3L946.6 447.6L945.4 445L941.8 443.4L938.3 442.2L937.4 442L936.2 442.4L935.3 440.5L937.4 439.8L935.1 439.2L933 437.8ZM963.5 445.2L965.6 445L967.9 445L969.1 442.7L970.6 442.9L970 445L967.4 446.4L964.7 446.2ZM967.9 439.9L970 441.2L971.8 443.3L971.3 442.7L969.1 440.8ZM974.6 444.8L976.2 445.9L976.9 447.3L975.7 446.8ZM978 447.6L979.7 448.5L979.4 449ZM983.2 451.7L985.5 452.6L984.6 452.7ZM985.4 450.1L986.4 451.9L985.7 451.2ZM981.5 448.7L983.8 450.1L982.4 449.7ZM986.4 453.4L988.2 454.2L987.3 454.2ZM995.7 461.8L996.8 462.9L996.1 463ZM998.4 466.4L999.1 466.8L998.6 467ZM991.2 471L993.8 472.6L996.5 475L995.4 475L992.9 473.3ZM1014.6 466.3L1016.9 466.4L1016.7 467.5L1014.8 467.3ZM1017.2 464.5L1019.4 463.9L1018.1 465ZM953.3 454.2L955 457.3L955 460.5L958.2 461.8L959.1 465.4L960 468.8L963.9 471.1L965.1 472.8L967.9 475.9L971.6 480.5L972.1 483.7L972.8 486.7L971.8 490.3L970.9 493.6L968.8 496.7L967 501.1L966.5 504.1L963 504.9L960.2 507.3L957.7 505.9L955 506.7L950.6 505.3L948.4 502.9L948 500.9L946.2 500.3L946.2 498.9L945.4 495.2L945 494.2L944.5 496.7L941.8 498.7L940.4 496.7L938.7 494.8L937.8 493.4L933.4 492.3L929.5 492.5L924.2 493.8L920.7 495.2L919.8 496.9L913.6 496.9L910.1 499.1L906.6 498.7L905 497.7L906.1 493.2L904.8 490.3L904.1 487.1L902.4 482.8L902.5 478.1L902.4 475.7L903.2 474.1L905.7 473.2L908 471.9L911.2 471.3L914.5 470.4L916.3 469L917.5 467.2L917.7 465.4L920 465.9L920 464.3L922.5 462.3L924.6 460.4L926.9 460L928.3 461.8L930.6 461.6L930.4 459.1L932.7 457.2L935.8 455.2L936.2 456.8L940.4 456.8L943.4 456.8L941.8 458.8L941.7 461.8L944.5 463.6L948 466.3L950.3 466.3L951.5 462.7L951.9 459.1L952.2 457.5L952.8 454.7ZM957.2 510.6L960.3 511.5L963.3 510.8L963.5 513.3L962.8 515.9L959.5 516.7L958 513.8ZM931.6 455.4L933.6 455.2L933.4 456.1L932 456.1ZM942.5 459.6L943.4 459.6L943.1 460.5ZM942.9 500.5L945.2 500.5L944.5 501.1L943.1 501.1ZM1006.5 497.9L1009.3 499.7L1010.2 502.7L1011.3 502.1L1012.7 504.5L1016.7 504.5L1015.8 506.5L1013.9 508.2L1013.2 510.2L1011.1 512.5L1010.2 511.9L1010.6 509.2L1008.4 507.7L1010 505.1L1009.1 501.9L1007.2 499.5ZM1006.5 510.2L1009.3 511.7L1008.3 514.2L1006.5 516.5L1007.2 517.1L1004 518.4L1002.8 521.7L1000.9 523.2L998.7 523.2L995.6 521.5L997.3 519.5L998.2 517.6L1002.6 515.2L1003.9 514.2L1004.6 512.7L1005.4 511ZM997.5 523.6L998.6 523.9L997.9 524.5ZM823.4 528.5L826.4 529L825.2 530.1L823.8 529.9ZM593.2 406.9L593.8 406.3L594.5 406.9L593.8 407.4ZM593.6 408.3L594.2 407.8L594.8 408.3L594.2 408.8ZM594.1 409.6L594.7 409.1L595.3 409.6L594.7 410.2ZM594.1 411L594.7 410.4L595.3 411L594.7 411.5ZM593.7 412.2L594.4 411.7L595 412.2L594.4 412.8ZM596.7 412.3L597.3 411.8L597.9 412.3L597.3 412.8ZM592.9 414.2L593.5 413.6L594.1 414.2L593.5 414.7ZM592.7 405.3L593.3 404.7L593.9 405.3L593.3 405.8ZM590.9 404.9L591.5 404.4L592.2 404.9L591.5 405.4ZM587.6 403.1L588.2 402.6L588.8 403.1L588.2 403.6ZM590.5 403.5L591.1 402.9L591.7 403.5L591.1 404ZM565.3 390.7L565.9 390.2L566.5 390.7L565.9 391.3ZM567.3 390.6L567.9 390.1L568.6 390.6L567.9 391.2ZM568.6 392.1L569.2 391.6L569.8 392.1L569.2 392.7ZM569.3 394L569.9 393.4L570.5 394L569.9 394.5ZM572.4 398L573 397.5L573.7 398L573 398.6ZM565.7 388L566.3 387.5L567 388L566.3 388.6ZM571.2 395.1L571.8 394.5L572.4 395.1L571.8 395.6ZM574.7 396.7L575.3 396.2L576 396.7L575.3 397.3ZM580.2 414.1L580.8 413.6L581.4 414.1L580.8 414.6ZM578.2 413.5L578.9 412.9L579.5 413.5L578.9 414ZM588.8 416.1L589.4 415.6L590 416.1L589.4 416.6Z"/></g>
<g fill="#fff" stroke="#cecece" stroke-width=".9" stroke-linejoin="round"><path d="M540.1 347.4L542.7 347.6L546.3 347.2L548 347.8L552.4 347.8L553.1 346.9L552.4 344.7L549.8 342.9L546.6 342.5L544.5 344.5L542.2 346.1ZM547.5 358.1L549.3 357.9L550.1 355.4L550.3 352.2L551.5 351.1L552.4 349.3L549.8 349.1L547.5 351.1L547.3 354.7ZM553.1 348.9L555.1 348.7L558.6 348.9L561.2 350.4L561.2 352.2L558.9 351.9L558.2 354.5L557 355.4L556.7 353.4L554.5 353.9L555.4 351.3L553.3 349.6ZM555.2 358.1L556.8 358.7L559.5 357.9L563 356L563 355.6L560.4 356.2L557.7 357.3L555.6 357.3ZM561.6 354.7L563.9 354.7L567.8 354.3L567.9 353L565.6 353.2L562.6 353.7ZM758.1 437L758.6 435.1L761.2 434.7L762.5 435.7L762.1 437.7L760.9 439.6L759.6 439.9L758.2 438.9ZM785 349.8L788.5 347.8L792.1 346.9L795.6 347.2L795.6 350.4L792.6 350.6L792.1 352.2L790.8 352.6L792.1 355.1L794.7 356L795.1 358.5L795.6 358.9L795.2 361.6L797 363.7L797.2 367.1L793.8 368.1L791.2 367.7L788.5 366.5L788.4 364.9L789.1 363.1L790.8 361L789.4 360.4L788.5 358.5L786.8 356.4L785.9 355.4L785.9 353.2L784.5 352.2Z"/></g>
<g fill="none" stroke="#cbcbcb" stroke-width="1.1" stroke-linejoin="round"><path d="M453.8 288.5L453.8 314.9L457.1 315.1L459.9 318.3L463.4 316.2L467 319.8L470 324.1L473.1 325.8L472.8 329M485.8 342.3L534.5 342.3L535.3 342.7L540.1 343.8L544.5 344.5M553.1 347.8L555.1 348.7M557 355.4L555.8 357M563 355.6L562.8 354.7M567.8 353L570.1 351.1L576.2 351.1L578.3 349.1L580.3 345.8L582.4 346.1L582.7 349.3L584.1 350.9M495.9 376.6L500.1 376.2L506.6 378.9L511.6 378.9L511.6 378L514.5 378L518.1 382L520.7 383.3L523.4 381.8L525.5 384.6L527.2 387.7L530.9 389.2M539.7 409.7L540.6 407.2L542.7 407L541.3 405.1L542 404L545 404L546.4 402.9M545 404L545 407.4L545.6 407.4M546.6 407.8L544.9 410.1L543.4 411.2M544.9 410.1L546.3 410.8L547.5 411.9M548.4 412.6L549.4 411.2L551.2 410.8L552.8 409.4L555.6 409M551.2 415.9L553 416.1L554.7 416.3M556.7 418.6L556.1 420.9M575.9 400.6L575.9 403.6M576.6 414.7L574.5 416.5L573.6 419.1L574.5 421.4L575.3 423.2L578.9 423.2L579.7 424.7L583.3 424.6L582.7 427.5L583.6 430.2L584.1 433.3L584.3 433.3M584.3 433.3L583.3 431.9L579.2 432.4L579 433.5L579.9 434.2L578.9 434.5L579.6 436.3L579 442.7M579 442.7L577.5 442L578.5 439.9L575.3 439.6L572.7 438L569.5 435.6L567.4 434.9L565.6 434.2L563.2 433M569.5 435.6L569 438L566.5 440.1L564.1 441.3L563.7 443.3L562.1 444L560.7 443.1L560.7 441.3M579 442.7L573.9 444.1L572 448.2L573.8 451.9L577.8 452L577.8 454.7L579.7 454.5M579.7 454.5L581.2 457.5L580.6 461.4L579.6 462.5L580.8 464.1L579.7 466.3L578.3 467.9M579.7 454.5L582.4 454.2L587.1 452.6L587.1 456.1L591.2 457.7L593.8 459.1L595.8 459.8L596.1 464.1L599.5 464.1L599.7 466.1L600.7 467.3L599.8 470.4L599.7 471.1M599.7 471.1L598.1 469.5L593.3 470.2L591.9 474.8M591.9 474.8L588.9 475.9L585.4 474.1L583.8 475.9L582.4 474.4L581.5 470.8L579.7 466.3M583.8 475.9L581.7 479L581.7 483.7L579.2 487.5L578 492.3L579.2 497.1L577.3 502.1L576.7 507.1L575.7 512.3L575.9 517.6L576.6 520.8L574.8 526.3L573 530.8L574.8 533.1L575.3 535.4L581.7 536.1M581.3 537.1L581.3 542.3M591.9 474.8L594.7 477.7L600 480.3L600.5 484.1L603.5 484.3L606 481.1M599.7 471.1L600.2 474.6L603.9 475L604.4 478.1L606.5 478.3L606 481.1M606 481.1L607.4 483.9L603.9 486.2L600.7 489.8M600.7 489.8L603.7 491.1L607.1 493L608.5 494.6L608.1 496.5M600.7 489.8L599.7 494.2L599.3 497.1M584.3 433.3L586.8 434.2L589.4 432.1L590.5 431.2L589.1 428.8L591.4 428.9L591.5 428.4L595.1 427.5L595.2 426.3M595.2 426.3L594 425.1L594.5 423.7L596 423L595.4 421.8L596.5 420.5M595.2 426.3L596.8 427.5L596.5 430.5L598.2 433.1L600 432.8L602.6 432.1M601.4 424.9L600.2 428.4L601.2 429.6L602.6 432.1M602.6 432.1L603.7 431L606.2 431.4M607.1 425.4L606.3 426.7L606.2 431.4M606.2 431.4L609 431.6L611.3 428.1M678.9 385.8L686.9 385.8M698.3 371.5L699 373.7L700.1 376.6L696 379.5L693.4 381.4L689 382.6L686.9 383.9L686.9 386.5M686.9 386.5L686.9 389L681.1 389L681.1 393.6L679.3 394.5L679.3 397.6L672.2 397.6M686.9 386.5L693.7 390.8M693.7 390.8L690.7 390.8L692.5 406.3L692.9 408.1L685.5 408.3L681.9 407.9L680.7 409.4M673.1 407.2L676.7 406.2L679.3 408.1L680.7 409.4M680.7 409.4L682.1 413.6M672.8 413.7L674.9 413.1L678.1 413.3L682.1 413.6M678.1 413.3L678.1 414.9L676.3 416.1L675.8 416.3M672.6 411.7L677.9 411.7L677.9 412.2L672.6 412.4M682.1 413.6L686.3 413.6L688.1 417.5M678.8 419.6L681.9 417.9L683.5 419.5L684.1 420.7M684.1 420.7L685.6 422.5L687.2 422.1M681.9 423.3L684.1 420.7M687.2 422.1L688.3 420.5L688.1 417.5M689 427.7L687.4 424L687.2 422.1M688.1 417.5L691.3 417L692.5 417.2M692.5 417.2L697.3 418.4M697.3 418.4L697.4 423.2L696.7 426.5M692.5 417.2L692.9 414.7L694.6 412.2L697.3 410.6L701 408.8L702.6 409M697.3 418.4L697.3 416.1L702.2 415.9M704.3 424.7L703.3 423.2L703.1 418.8L702.2 415.9M705 424.6L705 419.6L703.6 417L703.8 416.1L702.2 415.9M707 424.2L707 419.6L708.5 417L708.5 414.9M702.6 409L702.9 410.8L704 412L706.1 413.6L708.5 414.9M703.8 416.1L706.1 413.6M708.5 414.9L709.4 411.7L714.5 412.6L718.9 412.9L723.3 412.2L726.2 411.3M702.6 409L708.4 408.3L709.6 405.8L709.6 401.5M693.7 390.8L704 398L705.4 399.5L707.8 400.4L709.6 401.5M709.6 401.5L712.8 400.4L723.3 393.6M717.4 367.9L716.8 371.7L715.4 374.1L718.1 377.4L718.9 381M722.5 375.2L720.3 378.1L718.9 381M718.9 381L719.5 385.2L718.8 388.6L719.8 391.2L723.3 393.6M723.3 393.6L727.2 395.3L728.6 394.5M728.6 394.5L744.5 400.9M744.5 400.9L744.5 400L746.2 400L746.2 396.4M746.2 396.4L746.2 382.9L746.2 378.3M746.2 396.4L767.2 396.4M728.6 394.5L730.4 399.5L729.5 405.6L726.2 411.3M744.5 400.9L744.5 407.8L742.5 408.1L741.5 412.6L742.5 416.1M742.5 416.1L739.2 419.6L734.8 421.4L731.3 421.9L729 422.3M726.2 411.3L727.2 412.6L728.5 414L728.8 417.9L726.9 418.2L729 422.3M727.2 412.6L726.5 416.1L724.8 420L723 423.2L720.7 423.3L718.6 425.3L717.4 427.4M729 422.3L727.7 425.1L728.1 427.4L730.7 432.4M719.5 431.4L722.1 431.6L725.6 431.6L727.7 431.6L730.7 432.4M719.5 433.7L722.1 433.7L722.1 431.6M721.9 442.4L723 441.5L722.6 439.6L724.2 439.2L725.1 439.6L727.6 438.7L727.6 436.3L726.7 435.4L727.7 433.8L725.6 433.1L725.6 431.6M723.7 445.5L725.3 443.4L727.6 444L729.2 442.9L730.7 439.2L733.4 436.4L733.6 433.7L734.1 431.2L735 429.3L735 427.9M730.7 432.4L731.4 429.3L735 429.3M735 427.9L736.6 426.5L741.7 428.2L745.2 426.5L746.8 426.7L750.5 426.5M742.5 416.1L744 420.2L744.8 420.2L746.6 422.3L748.7 423.9L750.5 426.5M744.8 420.2L746.2 417.4L751.5 418.9L754.2 418.2L756.8 418.2L759.3 414.9L760.7 414L760.5 416.8L762.3 418.8M750.5 426.5L754.2 427.7L756.6 429.1L758.4 429.1L762.1 428.1L765.5 427.4M765.5 427.4L764.4 425.8L763.3 423.7L760.3 421.6L762.3 420.5L762.3 418.8M762.3 418.8L762.6 416.8L763.9 414.5L765.8 413.1L766.5 410.3M766.5 410.3L767.4 405.3L770.2 403.6M766.5 410.3L769 409.2L771.1 409.7L774.1 410.6L776.9 413.5M778.1 413.3L776.9 413.5L775.9 416.1L777.8 416.3L778.5 415.2M777.8 416.3L778 418.6L779.7 419.6L785 421.4L786.8 421.4L781.5 426.7L778.8 427L776.2 428.2L774.4 428.6M765.5 427.4L767.2 427.7L769.3 429.1L771.8 429.5L774.4 428.6M774.4 428.6L774.4 435.4L775.3 438.4M762.1 428.1L763 430.2L763.9 432.8L762.1 434.9L762.1 437.1M762.1 437.1L768.5 440.6L768.6 441.5L771.3 443.6M756.6 429.1L756.6 431.4L754.5 434.4L754.4 437.7M754.4 437.7L755.9 437.1L762.1 437.1M754.4 437.7L753.7 439.9L753.8 443.1M755.9 437.1L756.5 439.6L755.9 441.7L754 443.1M753.3 440.1L756.5 439.6M757 450.5L760.2 451.9L762.1 452M763.7 455.6L768.3 455.9L773.4 453.8M760.3 452.2L760.9 455.7L759.8 459.3L762.8 460.9L763.9 465L765.3 463.6L765.1 461.1L763.7 459.1L763.7 455.6M756.5 449.9L753.1 450.3L752.2 451.7L752.6 454.2L752.2 456.3L754.7 456.8L754.7 458.9L753.1 458.9L750.1 456.1L746.8 455L744.5 454.7L744.5 458.2L741 458.2M723.9 445.9L725.1 445.7L731.4 445.7L732.2 448.2L736.6 447.6L736.4 449.4L740.6 448.2L740.6 452L741.5 455L744.5 454.7M723.7 445.5L724.4 444.1L724.9 443.3L723.3 444.1M741 458.2L741 463.9L743.4 466.4M723 465.9L726.9 466.1L734.8 466.1L739.2 467.2L743.4 466.4L746.8 466.8M739.2 467.7L739.2 474.4L737.4 474.4L737.4 479.6L737.4 486.3L731.3 486.7M737.4 479.6L738.8 483.3L742 482L742.7 480.5L747.1 481.3L749.6 477.6L754 474.8M746.8 466.8L746.8 468.1L748.4 469.9L751 471.7L754 474.8M746.8 466.8L749.8 467.2L753.1 463.6L755.8 462.9M755.8 462.9L755.4 461.4L760.7 460M755.8 462.9L757.4 463.6L760.2 464.8L760 469.9L759.3 473.2L757.4 475.2M754 474.8L757.4 475.2M757.4 475.2L758.6 479L758.6 483.3L760.2 483.5M758.6 483.3L756.8 481.8L756.5 483.3L757.4 484.3L758.8 484.3L758.6 483.3M749.8 488.6L752.8 486.7L754 488.4L751.5 490.5L749.8 488.6M686.7 357.7L687.9 357.9L690.6 357.7L691.3 358.3L690 359.5L690 361.2L689.9 362.2L689 362.4L689.9 363.7L689.3 364.9L689.9 365.3L689 366.7L689.2 367.3M699 354.5L699.7 355.4L702.2 356L703.4 355.8L705.2 356.4L707.7 356.6M706.6 337.5L707.3 338.4L709.6 340L710.7 339.8L712.4 341.1L713.5 341.1L716.6 342.3L715.6 345.4M715.6 345.4L714.5 345.6L712.9 348.3L714.2 349.1L714.5 349.1L713.8 350.9L714.5 352.8L715.4 353.7M708.2 336.8L709.8 336.8L711 336.5L712.4 337.2L712.2 338.2L712.8 338.2M712.8 338.2L712.9 335.9L714.2 335.4L714.5 334.7L714.9 332.6M712.8 338.2L712.9 339.8L713.5 341.1M712.4 341.1L712.4 339.8L712.9 339.8M717.4 328.5L719.6 328.7M727.4 330.9L727 333.5L728.1 335.2L728.6 337.7M728.6 337.7L727.4 337.7L724.2 339.1L723.5 339.3L726.5 342.7L726.5 343.2M726.5 343.2L724.8 344.3L725.1 345.6L720.7 345.8L719.1 345.6M719.1 345.6L717.4 345.2L715.6 345.4M714.5 349.1L717 348L718.1 349.3L720.5 347.6L720.7 346.9M719.1 345.6L718.9 346.7L720.7 346.9M720.7 346.9L723.7 346.7L726.3 347.8M726.3 347.8L726.2 349.3L726.5 349.8M726.3 347.8L730.6 347.2M730.6 347.2L732.3 344.5M726.5 343.2L728.6 342.3L732 342.9L732.3 344.5M728.6 337.7L730.9 338.9L732 339.3L735.3 341.1M732 342.9L734.1 342L735.3 341.1M735.3 341.1L737.8 341.6L741.8 342M741.8 342L742.2 340.9L744.7 338.6L743.8 336.5L743.8 334L744.3 330.9L743.6 330.7L742.4 329.7L736.9 329.7M742.4 329.7L742.2 328.2L739.7 327.8M739.4 325.6L744.5 325.1L746.2 325.3L749.1 326.5M743.6 330.7L747.1 330.2L747.7 328.5L749.1 326.5M745.2 321.1L748 321.3L750.5 322.1M749.1 326.5L751.9 325.6L751.2 322.6L750.5 322.1M750.5 322.1L750.7 318.8L751.5 317M751.2 314.4L754.2 311.7L757.7 307.9L755.1 305.4L755.1 300.1L753.5 296.6L755.1 294.2L752.4 290.6L753.1 290.3L756.6 288.5M753.1 290.3L753.8 288.8L751.5 286.9L748 288.1L747.7 290.3L744 291.2L739.7 289.4L738.5 290M738.5 290L744 293.6L743.8 297.8L744.8 299.8M738.5 290L734.1 291.8L730.7 294.8L727.7 298.9L726.3 303.2L723.7 306.3L723.7 311.7L724.6 314.4L722.8 316.7L721.9 318.5M751.9 325.6L756.6 326.8L756.5 328.7L759.5 332.1L758.2 335.2M743.8 336.5L746.2 335.6L751.2 336.5L755.9 337L758.2 335.2M758.2 335.2L762.1 334.7L764.8 339.1L769.2 340.2L772.9 340.9L772.3 344.7L769.5 346.5M741.8 342L741.3 343.6L742.5 344.5L746.1 345.2L749.1 343.8L753.5 344.7L755.2 348L751.9 350L754.5 350.4M749.1 343.8L751.7 347.2L751.9 350M742.2 352.8L747.1 353.9L749.8 353L752.6 353.9M742.5 344.5L739.2 348.5L738 348.7L739.9 351.5L742.2 352.8M732.3 344.5L735.3 344.9L738.3 343.4L741.3 343.6M730.6 347.2L731.4 347.8L732.7 349.1L735.5 349.1L738 348.7M726.2 350L729.2 350L731.4 347.8M730 350.6L732.2 350.6L735.7 351.1L736.4 351.3L735.9 352.6L736.7 354.9L734.8 356.4L733.4 355.4L730.7 353.2L730 350.6M735.5 349.1L735.9 351.1M742.2 352.8L741.7 355.4L741.7 356.8L740.1 357L738.5 357.7L737.4 356.2L736.2 354.9L736.7 354.9M736.4 357.7L738.5 357.7L738.3 359.5L739.2 359.8L737.4 362.2M739.2 359.8L742.5 358.9L741.7 356.8M742.5 358.9L745.4 358.7L748.2 358.1L748.5 358.1L749.1 358.9L748 360M748.5 358.1L751.5 357.5M775.3 358.5L778.8 359.3L779 360.6L781.1 362.2L779.7 362.8L781.1 367.3M781.1 367.3L776.9 367.5L773.9 367.5L770.6 368.3L766.9 368.1L766 369.7L765.5 369.9M772.7 354.5L777.1 354.9L780.6 356L784 357.7L786.4 359.1L787.8 357.9M778.8 359.3L781.5 358.9L784 357.7M781.5 358.9L782.5 360L784.1 362.6L784.1 363.9M781.1 362.2L784.1 363.9L786.8 362.4L788.4 364.9M776.9 367.5L774.8 372.1L770.6 374.8M770.6 374.8L767 377L765.3 376.2L764.9 375L766.7 373.3L765.6 372.5M764 375.4L764.9 375M770.6 374.8L771.3 377.2L767.4 378.5L769.2 380.5L765.8 382.9L763.9 382.4M764.9 376.2L764.8 378.5L763.9 382.4M762.5 378.9L763.7 382.4M771.3 377.2L773.4 377.8L776.4 379.3L781 382.9L784.1 383.1L786.2 384.3L787.5 384.3M784.1 383.1L785.7 381.4L786.8 381.4M781.1 367.3L782.2 369.7L783.8 371.3L782.2 373.7L783.4 375.6L786.2 377.8L786.2 379.5L787.8 381.4M777.6 406.5L778.3 404.7L780.1 404.7L784 405.1L785 405.5L788.2 403.1L793.8 401.8L799.1 400L800.3 396.4L799.5 395.1L794.9 394.7L793.1 392.3M793.8 401.8L795.8 406.2M799.5 395.1L800.9 392.5L801.6 391M797.2 367.1L798.8 366.9L803.2 365.3L806.7 366.7L810 368.5L809.9 371.1L808.8 373.5L809.5 378.5L811.1 379.5L809.5 381.8L813.2 386.7L810.7 390.5M794.7 357.9L797.3 356.8L800.9 358.9L802.6 358.9L805.5 355.8L807.9 357L811.3 359.3L815.8 363.9L819.4 366.9M810 370.5L815.8 369.1L819.4 366.9M800.9 358.9L800.9 351.1L805.5 349.8L809.9 352.4L811.4 354.3L816.6 353.9L818.7 355.4L818.5 357.5L822 359.3L827.1 356.8M819.4 366.9L822 367.7M822 367.7L825.5 366.5L828.2 368.3L831.7 366.9L834.2 367.3M809.5 381.8L819 381.6L824.3 377.8L825.5 375.2L827.5 373.7L828.2 369.7L834.2 367.3M822.4 393.2L827.3 391.9L824.7 387.1L828.9 385.4L832.4 381.4L833.6 378L832.6 375.6L832.6 372.3L839.3 370.7M834.2 367.3L839.3 370.7L841.4 373.1L841 379.1L844.9 381M843.3 383.7L844.9 381L850.2 383.7L853.7 385.2L857.4 385.4L857.4 388.2L852 387.7L849 386.3L843.3 383.7M858.7 386.5L860.4 384.8L863.6 385.6L864.3 387.3L860.4 387.7L858.7 386.5M857.4 385.4L858.7 386.5M863.6 385.6L867.8 382.9L871.4 382.6L873.6 384.8M859 396.7L858.7 392.1L857.4 391L858 388.2L860.4 389.2L860.4 390.3L865 390.8L863.1 392.9L863.6 394.5L865.4 397.3L864.8 398.7M865.4 397.3L866.8 392.9L869.1 389.9L869.9 387.7L873.6 384.8M873.6 384.8L876.1 386L875.8 389.3L874.2 392.7L876.6 394.3L877 396.2L880.3 396.7M880.3 396.7L878.6 399.3L874.9 400.6L873.8 402.7L875.9 407L875.2 408.7L877 411.3L877.7 414.7L876.3 417.5M878.6 399.3L879.3 400.9L880.7 400.9L880.2 404.5L882.1 403.3L885.4 403.1L886.9 406.5L888.3 410.1M880.3 396.7L882.3 395.6M882.3 395.6L883.7 398.2L886.5 399.3L885.4 400.7L887.6 402.4L889.9 405.4L891.8 408.5L891.6 409.7M882.3 395.6L885.4 395.3L888.1 394.2L890.2 396.4L892.5 397.3M883.5 414.9L882.6 411.5L884.6 410.1L888.3 410.1L891.6 409.7L891.8 413.6L889 416.1L886.2 417.2M878.8 423.9L880.2 425.4L882.1 424.6M856.9 341.8L864.3 338.2L873.1 340.5L875.8 335.4L881.9 336.8L890.7 340L897.8 341.4L906.6 340.2L907.8 340.5L905.7 344.3L909.8 345.2L913.5 347.4L907.5 348.3L903.1 351.1L899.2 353.9L895.1 356.4L887.2 358.3L879.3 356L872.1 356L862.5 350.6L862.4 346.9L856.9 341.8M788.5 347.8L787.7 344.9L785 343.8L784.1 339.1L788 338.6L792.1 336.3L798.2 337.7L802.6 337.5L807.7 338.4L810.6 337L809.7 330.7L817.1 329.7L823.8 327.3L827.3 329.9L831.7 330.9L837.2 330.2L843.2 338.2L849.3 337.7L856 341.8M856 341.8L853.2 343.6L853 346.5L848.4 346.3L847.6 350.2L843.5 351.1L843.5 357M843.5 357L841.4 355.8L835.6 355.8L831.7 355.4L827.3 356.4L827.1 356.8M843.5 357L837.5 359.8L832.2 362.4M832.2 362.4L826.4 362.4M826.4 362.4L822.9 362.6L822 367.7M826.4 362.4L827.3 359.1L827.1 356.8M832.2 362.4L834.2 367.3M907.8 340.5L909.8 341.1L913.1 335.4L915 332.3L919.8 331.8L924.2 333.5L926.9 339.3L932.1 342.5L933 345.2L939.5 343.8L936.7 350.9L933.6 353.2L933.2 355.6L932.5 356.8M932.5 356.8L927.7 357.5L925.8 357.9L921.4 361.8M924.4 366.1L928.4 364.7M895.3 431.9L896 433.7L899.2 433.7L902.5 433.1L904.7 431.9L906.1 428.1L909.4 428.1M903.2 427.4L904.5 428.4L905.4 426.8M950.6 439.9L950.6 451.3M922.3 451.2L922.6 451.5L922.5 452.2"/></g>
<g stroke-width="1" fill-opacity=".5" stroke-opacity=".85"><circle cx="524" cy="363.7" r="47" fill="rgb(223,47,43)" stroke="rgb(223,47,43)"/><circle cx="686.7" cy="331.6" r="31.2" fill="rgb(242,100,93)" stroke="rgb(242,100,93)"/><circle cx="712.3" cy="331.9" r="26.4" fill="rgb(245,111,103)" stroke="rgb(245,111,103)"/><circle cx="720.3" cy="334" r="18" fill="rgb(251,127,117)" stroke="rgb(251,127,117)"/><circle cx="875.4" cy="371.8" r="29.8" fill="rgb(243,104,96)" stroke="rgb(243,104,96)"/><circle cx="778.6" cy="393.0" r="11.4" fill="rgb(254,135,125)" stroke="rgb(254,135,125)"/><circle cx="914.3" cy="393.3" r="5.3" fill="rgb(255,137,127)" stroke="rgb(255,137,127)"/><circle cx="729.7" cy="362" r="3.5" fill="rgb(255,138,128)" stroke="rgb(255,138,128)"/><circle cx="608" cy="451" r="2.8" fill="rgb(255,138,128)" stroke="rgb(255,138,128)"/></g>
</svg>
</div>
<div id="frame-top"></div><div id="frame-left"></div>
<svg style="position:absolute;left:0;top:0;z-index:51" width="6" height="6" viewBox="0 0 6 6"><path d="M0 0H6V1H4.500A3.500 3.500 0 0 0 1 4.500V6H0Z" fill="#3a363b"/></svg>
</body>
</html>
